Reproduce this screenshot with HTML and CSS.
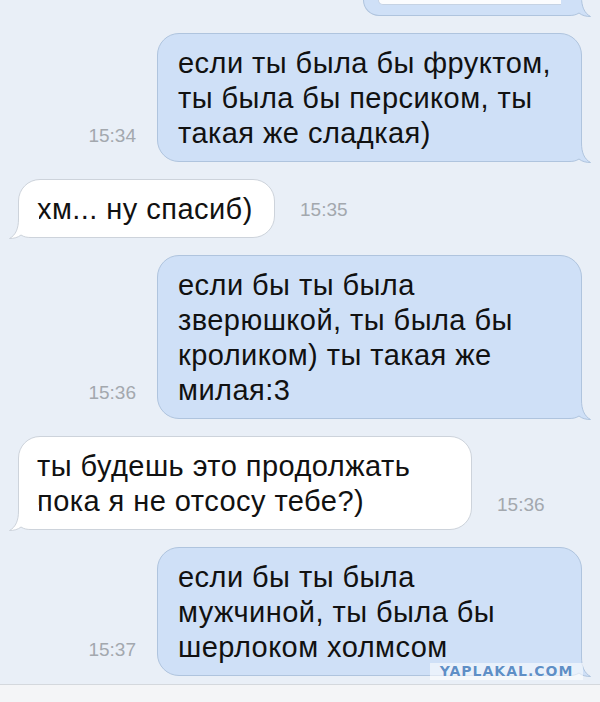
FILE: index.html
```html
<!DOCTYPE html>
<html lang="ru">
<head>
<meta charset="utf-8">
<title>Сообщения</title>
<link rel="stylesheet" href="styles.css">
</head>
<body>
<div class="screen">
  <div class="chat">
    <div class="row row-out">
      <div class="bubble bubble-out bubble-cut">
        <div class="attach"></div>
        <svg class="tail tail-out" viewBox="0 0 31 26" width="31" height="26"><rect x="0" y="0" width="31" height="26" class="tail-bg"/><path class="tail-fill" d="M0,0 H20.5 V6 C20.5,15 23,22 29.5,25.5 C25,25.5 21,24.5 18,22 C15,24 12,24.5 8,24.5 H0 Z"/><path class="tail-line" d="M20.5,0 V6 C20.5,15 23,22 29.5,25.5 C25,25.5 21,24.5 18,22 C15,24 12,24.5 8,24.5 H0"/></svg>
      </div>
    </div>

    <div class="row row-out">
      <span class="time">15:34</span>
      <div class="bubble bubble-out">
        если ты была бы фруктом,<br>ты была бы персиком, ты<br>такая же сладкая)
        <svg class="tail tail-out" viewBox="0 0 31 26" width="31" height="26"><rect x="0" y="0" width="31" height="26" class="tail-bg"/><path class="tail-fill" d="M0,0 H20.5 V6 C20.5,15 23,22 29.5,25.5 C25,25.5 21,24.5 18,22 C15,24 12,24.5 8,24.5 H0 Z"/><path class="tail-line" d="M20.5,0 V6 C20.5,15 23,22 29.5,25.5 C25,25.5 21,24.5 18,22 C15,24 12,24.5 8,24.5 H0"/></svg>
      </div>
    </div>

    <div class="row row-in">
      <div class="bubble bubble-in">
        хм... ну спасиб)
        <svg class="tail tail-in" viewBox="0 0 31 26" width="31" height="26"><rect x="0" y="0" width="31" height="26" class="tail-bg"/><path class="tail-fill" d="M0,0 H20.5 V6 C20.5,15 23,22 29.5,25.5 C25,25.5 21,24.5 18,22 C15,24 12,24.5 8,24.5 H0 Z"/><path class="tail-line" d="M20.5,0 V6 C20.5,15 23,22 29.5,25.5 C25,25.5 21,24.5 18,22 C15,24 12,24.5 8,24.5 H0"/></svg>
      </div>
      <span class="time time-in">15:35</span>
    </div>

    <div class="row row-out">
      <span class="time">15:36</span>
      <div class="bubble bubble-out">
        если бы ты была<br>зверюшкой, ты была бы<br>кроликом) ты такая же<br>милая:3
        <svg class="tail tail-out" viewBox="0 0 31 26" width="31" height="26"><rect x="0" y="0" width="31" height="26" class="tail-bg"/><path class="tail-fill" d="M0,0 H20.5 V6 C20.5,15 23,22 29.5,25.5 C25,25.5 21,24.5 18,22 C15,24 12,24.5 8,24.5 H0 Z"/><path class="tail-line" d="M20.5,0 V6 C20.5,15 23,22 29.5,25.5 C25,25.5 21,24.5 18,22 C15,24 12,24.5 8,24.5 H0"/></svg>
      </div>
    </div>

    <div class="row row-in">
      <div class="bubble bubble-in bubble-wide">
        ты будешь это продолжать<br>пока я не отсосу тебе?)
        <svg class="tail tail-in" viewBox="0 0 31 26" width="31" height="26"><rect x="0" y="0" width="31" height="26" class="tail-bg"/><path class="tail-fill" d="M0,0 H20.5 V6 C20.5,15 23,22 29.5,25.5 C25,25.5 21,24.5 18,22 C15,24 12,24.5 8,24.5 H0 Z"/><path class="tail-line" d="M20.5,0 V6 C20.5,15 23,22 29.5,25.5 C25,25.5 21,24.5 18,22 C15,24 12,24.5 8,24.5 H0"/></svg>
      </div>
      <span class="time time-in time-low">15:36</span>
    </div>

    <div class="row row-out">
      <span class="time">15:37</span>
      <div class="bubble bubble-out">
        если бы ты была<br>мужчиной, ты была бы<br>шерлоком холмсом
        <svg class="tail tail-out" viewBox="0 0 31 26" width="31" height="26"><rect x="0" y="0" width="31" height="26" class="tail-bg"/><path class="tail-fill" d="M0,0 H20.5 V6 C20.5,15 23,22 29.5,25.5 C25,25.5 21,24.5 18,22 C15,24 12,24.5 8,24.5 H0 Z"/><path class="tail-line" d="M20.5,0 V6 C20.5,15 23,22 29.5,25.5 C25,25.5 21,24.5 18,22 C15,24 12,24.5 8,24.5 H0"/></svg>
      </div>
    </div>
  </div>
  <div class="footer"></div>
  <div class="watermark">YAPLAKAL.COM</div>
</div>
</body>
</html>
```
FILE: styles.css
```css
* { box-sizing: border-box; }

html, body {
  margin: 0;
  padding: 0;
}

body {
  background: #e9eff7;
  font-family: "Liberation Sans", Arial, sans-serif;
  color: #111;
}

.screen {
  position: relative;
  width: 600px;
  height: 702px;
  display: flex;
  flex-direction: column;
  overflow: hidden;
}

.chat {
  flex: 1;
  display: flex;
  flex-direction: column;
  gap: 17px;
  padding: 0 18px;
}

.row {
  display: flex;
  align-items: flex-end;
}

.row-out { justify-content: flex-end; }
.row-in { justify-content: flex-start; }

.bubble {
  position: relative;
  font-size: 29px;
  line-height: 35px;
  letter-spacing: 0.45px;
  padding: 12px 20px 10px;
  border-radius: 22px;
  white-space: nowrap;
}

.bubble-out {
  width: 425px;
  background: #cfe0f7;
  border: 1px solid #afc4de;
  border-bottom-right-radius: 0;
}

.bubble-in {
  width: 257px;
  background: #ffffff;
  border: 1px solid #cdd3db;
  border-bottom-left-radius: 0;
  padding-left: 18px;
}

.bubble-wide { width: 454px; }

.bubble-cut {
  width: 219px;
  height: 16px;
  padding: 0 14px 0 14px;
  border-top: none;
  border-radius: 0 0 0 20px;
}

.attach {
  height: 5px;
  background: #fbfcfe;
  border: 1px solid #c6d3e4;
  border-top: none;
  border-radius: 0 0 10px 10px;
}

.tail {
  position: absolute;
  bottom: -2px;
  display: block;
}

.tail-out { right: -11px; }
.tail-in { left: -11px; transform: scaleX(-1); }

.tail-bg { fill: #e9eff7; }
.bubble-out .tail-fill { fill: #cfe0f7; }
.bubble-out .tail-line { fill: none; stroke: #afc4de; stroke-width: 1; }
.bubble-in .tail-fill { fill: #ffffff; }
.bubble-in .tail-line { fill: none; stroke: #cdd3db; stroke-width: 1; }

.time {
  font-size: 19px;
  line-height: 22px;
  color: #a3a8ae;
  margin-bottom: 15px;
  margin-right: 21px;
}

.time-in { margin: 0 0 17px 25px; }
.time-low { margin-bottom: 14px; }

.footer {
  height: 18px;
  background: #f4f5f7;
  border-top: 1px solid #d4d8dd;
}

.watermark {
  position: absolute;
  left: 430px;
  top: 663px;
  width: 153px;
  height: 17px;
  background: rgba(255, 255, 255, 0.55);
  font-family: "DejaVu Sans", sans-serif;
  font-weight: bold;
  font-size: 14px;
  line-height: 17px;
  letter-spacing: 1px;
  text-align: center;
  color: #5f8fc6;
  text-shadow: 0 0 1px #ffffff, 0 0 1px #ffffff;
}
```
